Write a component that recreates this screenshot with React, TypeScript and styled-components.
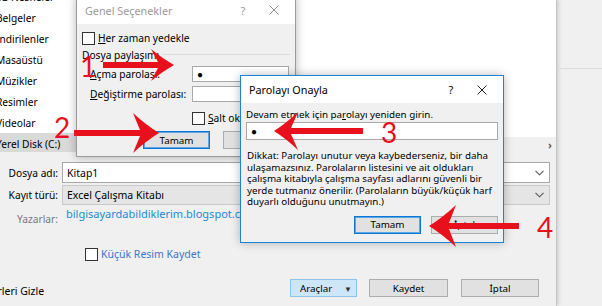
import React from "react";
import styled, { createGlobalStyle } from "styled-components";

const UI_FONT = "'Noto Sans', 'Open Sans', sans-serif";
const RED = "#e8101c";

const Global = createGlobalStyle`
  body {
    margin: 0;
    background: #f0f0f0;
    font-family: ${UI_FONT};
    font-size: 9.8px;
    color: #000;
  }
`;

const Page = styled.div`
  position: relative;
  width: 602px;
  height: 306px;
  overflow: hidden;
  display: flex;
  background: #f0f0f0;
`;

/* ---------- background: Farklı Kaydet window ---------- */

const SaveWindow = styled.div`
  width: 556px;
  height: 306px;
  display: flex;
  flex-direction: column;
  border-right: 1px solid #c4c4c4;
  box-shadow: 2px 0 3px rgba(0, 0, 0, 0.12);
  background: #f0f0f0;
`;

const SidePane = styled.div`
  flex: 1;
  display: flex;
  flex-direction: column;
`;

const SideTop = styled.div`
  height: 68px;
  border-bottom: 1px solid #dcdcdc;
`;

const Browser = styled.div`
  height: 152px;
  display: flex;
  flex-shrink: 0;
`;

const NavPane = styled.div`
  width: 76px;
  background: #fff;
  overflow: hidden;
`;

const NavList = styled.ul`
  list-style: none;
  margin: -14px 0 0 -4px;
  padding: 0;
`;

const NavItem = styled.li<{ $selected?: boolean }>`
  height: 21px;
  display: flex;
  align-items: center;
  white-space: nowrap;
  font-size: 10.2px;
  background: ${(p) => (p.$selected ? "#d9d9d9" : "transparent")};
`;

const FileList = styled.div`
  flex: 1;
  display: flex;
  flex-direction: column;
  background: #fff;
`;

const FileArea = styled.div`
  flex: 1;
`;

const HScroll = styled.div`
  height: 15px;
  background: #f0f0f0;
  display: flex;
  justify-content: flex-end;
  align-items: center;
  padding-right: 4px;
  color: #606060;
  font-size: 11px;
  font-weight: bold;
`;

const Form = styled.div`
  display: grid;
  grid-template-columns: 58px 488px;
  grid-template-rows: 21px 20px 24px;
  column-gap: 4px;
  row-gap: 2px;
  padding-top: 10px;
`;

const Label = styled.div<{ $muted?: boolean }>`
  text-align: right;
  align-self: center;
  font-size: 10.2px;
  color: ${(p) => (p.$muted ? "#7a7a7a" : "#000")};
`;

const TextField = styled.div`
  background: #fff;
  border: 1px solid #a8a8a8;
  display: flex;
  align-items: center;
  justify-content: space-between;
  padding: 0 5px 0 4px;
  font-size: 10.5px;
`;

const SelectField = styled(TextField)`
  background: #e5e5e5;
  border-color: #c9c9c9;
`;

const Chevron = () => (
  <svg width="9" height="6" viewBox="0 0 9 6">
    <path d="M0.5 0.8 L4.5 4.8 L8.5 0.8" fill="none" stroke="#555" strokeWidth="1.1" />
  </svg>
);

const Watermark = styled.div`
  align-self: start;
  margin: 0 0 0 4px;
  font-size: 11px;
  color: #1a8ad4;
  line-height: 14px;
`;

const CheckRow = styled.label`
  display: flex;
  align-items: center;
  gap: 3px;
  margin: 16px 0 0 85px;
  font-size: 10.5px;
  color: ${(p) => p.color || "#000"};
`;

const Box = styled.span<{ $size?: number }>`
  display: inline-block;
  width: ${(p) => p.$size || 11}px;
  height: ${(p) => p.$size || 11}px;
  border: 1px solid #333;
  background: #fff;
  flex-shrink: 0;
`;

const Footer = styled.div`
  display: flex;
  align-items: flex-start;
  margin-top: 18px;
  padding-right: 17px;
`;

const HideFolders = styled.div`
  margin: 5px 0 0 -29px;
  font-size: 10.5px;
  white-space: nowrap;
`;

const ButtonGroup = styled.div`
  margin-left: auto;
  display: flex;
`;

const Button = styled.button<{ $w: number; $default?: boolean; $gap?: number }>`
  width: ${(p) => p.$w}px;
  height: 18px;
  margin-left: ${(p) => p.$gap || 0}px;
  padding: 0;
  font-family: ${UI_FONT};
  font-size: 9.8px;
  color: #000;
  background: #e1e1e1;
  border: 1px solid ${(p) => (p.$default ? "#0a78d4" : "#adadad")};
  box-shadow: ${(p) => (p.$default ? "inset 0 0 0 1px #5aa5e3" : "none")};
  display: flex;
  align-items: center;
  justify-content: center;
`;

const ToolsButton = styled(Button)`
  background: #cde6f8;
  border-color: #8fc2ea;
  justify-content: space-between;
  padding: 0 4px 0 9px;
`;

const Caret = styled.span`
  font-size: 8px;
  color: #333;
`;

/* ---------- dialogs ---------- */

const Dialog = styled.div<{ $left: number; $top: number; $w: number; $active?: boolean }>`
  position: absolute;
  left: ${(p) => p.$left}px;
  top: ${(p) => p.$top}px;
  width: ${(p) => p.$w}px;
  background: #f0f0f0;
  border: 1px solid ${(p) => (p.$active ? "#1883d7" : "#9a9a9a")};
  box-shadow: 0 0 9px rgba(0, 0, 0, 0.28);
  display: flex;
  flex-direction: column;
`;

const TitleBar = styled.div<{ $h: number; $active?: boolean }>`
  height: ${(p) => p.$h}px;
  background: #fff;
  display: flex;
  align-items: center;
  padding-left: 8px;
  font-size: 10.8px;
  color: ${(p) => (p.$active ? "#000" : "#9a9a9a")};
`;

const TitleText = styled.span`
  flex: 1;
`;

const TitleHelp = styled.span`
  width: 20px;
  text-align: center;
  font-size: 11px;
`;

const TitleClose = styled.span`
  width: 42px;
  display: flex;
  justify-content: center;
`;

const CloseIcon = ({ color }: { color: string }) => (
  <svg width="10" height="10" viewBox="0 0 10 10">
    <path d="M0.5 0.5 L9.5 9.5 M9.5 0.5 L0.5 9.5" stroke={color} strokeWidth="1" />
  </svg>
);

const Body = styled.div<{ $pad: string }>`
  padding: ${(p) => p.$pad};
  display: flex;
  flex-direction: column;
`;

const OptRow = styled.div<{ $mt?: number; $ml?: number }>`
  display: flex;
  align-items: center;
  gap: 3px;
  margin-top: ${(p) => p.$mt || 0}px;
  margin-left: ${(p) => p.$ml || 0}px;
  white-space: nowrap;
  font-size: 10.2px;
`;

const GroupHeader = styled.div`
  display: flex;
  align-items: center;
  gap: 3px;
  height: 16px;
  margin-top: 2px;
  font-size: 10.2px;
  &::after {
    content: "";
    flex: 1;
    height: 1px;
    background: #dcdcdc;
    margin-top: -1px;
  }
`;

const FieldRow = styled.div<{ $mt: number }>`
  display: flex;
  align-items: center;
  margin: ${(p) => p.$mt}px 0 0 8px;
  font-size: 10.2px;
`;

const FieldLabel = styled.span`
  width: 102px;
`;

const Input = styled.div<{ $w?: number; $h: number }>`
  width: ${(p) => (p.$w ? `${p.$w}px` : "auto")};
  height: ${(p) => p.$h}px;
  box-sizing: border-box;
  background: #fff;
  border: 1px solid #a8a8a8;
  display: flex;
  align-items: center;
  padding-left: 4px;
  font-size: 10px;
`;

const Key = styled.span`
  text-decoration: underline;
`;

const DialogButtons = styled.div<{ $mt: number }>`
  display: flex;
  justify-content: flex-end;
  margin-top: ${(p) => p.$mt}px;
`;

const Prompt = styled.div`
  margin-top: 5px;
  line-height: 14px;
  font-size: 9.8px;
`;

const Warning = styled.p`
  margin: 10px 0 0 1px;
  line-height: 11.5px;
  font-size: 9.8px;
`;

/* ---------- annotations ---------- */

const Annotations = styled.svg`
  position: absolute;
  left: 0;
  top: 0;
  pointer-events: none;
`;

const StepNumber = styled.span<{ $x: number; $y: number }>`
  position: absolute;
  left: ${(p) => p.$x}px;
  top: ${(p) => p.$y}px;
  font-family: Lato, "DejaVu Sans", sans-serif;
  font-weight: 400;
  font-size: 28px;
  line-height: 1;
  color: ${RED};
`;

type ArrowSpec = { tx: number; ty: number; len: number; head: number; spread: number; dir: 1 | -1 };

const arrows: ArrowSpec[] = [
  { tx: 174, ty: 65, len: 71, head: 23, spread: 16, dir: 1 },
  { tx: 159, ty: 133, len: 85, head: 26, spread: 20, dir: 1 },
  { tx: 274, ty: 131, len: 89, head: 24, spread: 19, dir: -1 },
  { tx: 429, ty: 226, len: 90, head: 27, spread: 21, dir: -1 },
];

// dart-shaped arrow pointing right with its tip at 0,0
const arrowPath = ({ len, head, spread }: ArrowSpec) => {
  const j = head - 7;
  return `M0 0 Q${-head * 0.5} ${-spread * 0.4} ${-head} ${-spread}
    L${-j} -3 L${-len} -3 L${-len} 3 L${-j} 3
    L${-head} ${spread} Q${-head * 0.5} ${spread * 0.4} 0 0 Z`;
};

const navItems = [
  "3B Nesneler",
  "Belgeler",
  "İndirilenler",
  "Masaüstü",
  "Müzikler",
  "Resimler",
  "Videolar",
  "Yerel Disk (C:)",
];

export default function App() {
  return (
    <>
      <Global />
      <Page>
        <SaveWindow>
          <Browser>
            <NavPane>
              <NavList>
                {navItems.map((n) => (
                  <NavItem key={n} $selected={n.startsWith("Yerel")}>
                    {n}
                  </NavItem>
                ))}
              </NavList>
            </NavPane>
            <FileList>
              <FileArea />
              <HScroll>›</HScroll>
            </FileList>
          </Browser>

          <Form>
            <Label>Dosya adı:</Label>
            <TextField>
              Kitap1
              <Chevron />
            </TextField>
            <Label>Kayıt türü:</Label>
            <SelectField>
              Excel Çalışma Kitabı
              <Chevron />
            </SelectField>
            <Label $muted>Yazarlar:</Label>
            <Watermark>bilgisayardabildiklerim.blogspot.com</Watermark>
          </Form>

          <CheckRow color="#3a78c8">
            <Box />
            Küçük Resim Kaydet
          </CheckRow>

          <Footer>
            <HideFolders>Klasörleri Gizle</HideFolders>
            <ButtonGroup>
              <ToolsButton $w={67}>
                Araçlar <Caret>▼</Caret>
              </ToolsButton>
              <Button $w={79} $gap={12}>
                Kaydet
              </Button>
              <Button $w={78} $gap={13}>
                İptal
              </Button>
            </ButtonGroup>
          </Footer>
        </SaveWindow>
        <SidePane>
          <SideTop />
        </SidePane>

        <Dialog $left={76} $top={-5} $w={218}>
          <TitleBar $h={28}>
            <TitleText>Genel Seçenekler</TitleText>
            <TitleHelp>?</TitleHelp>
            <TitleClose>
              <CloseIcon color="#8a8a8a" />
            </TitleClose>
          </TitleBar>
          <Body $pad="7px 5px 7px 5px">
            <OptRow>
              <Box />
              <span>
                <Key>H</Key>er zaman yedekle
              </span>
            </OptRow>
            <GroupHeader>Dosya paylaşımı</GroupHeader>
            <FieldRow $mt={3}>
              <FieldLabel>
                <Key>A</Key>çma parolası:
              </FieldLabel>
              <Input $w={97} $h={16}>
                ●
              </Input>
            </FieldRow>
            <FieldRow $mt={4}>
              <FieldLabel>
                <Key>D</Key>eğiştirme parolası:
              </FieldLabel>
              <Input $w={97} $h={16} />
            </FieldRow>
            <OptRow $mt={9} $ml={110}>
              <Box />
              <span>
                <Key>S</Key>alt okunur önerilir
              </span>
            </OptRow>
            <DialogButtons $mt={6}>
              <Button $w={67} $default>
                Tamam
              </Button>
              <Button $w={67} $gap={13}>
                İptal
              </Button>
            </DialogButtons>
          </Body>
        </Dialog>

        <Dialog $left={240} $top={75} $w={262} $active>
          <TitleBar $h={27} $active>
            <TitleText>Parolayı Onayla</TitleText>
            <TitleHelp>?</TitleHelp>
            <TitleClose>
              <CloseIcon color="#222" />
            </TitleClose>
          </TitleBar>
          <Body $pad="0 5px 8px 5px">
            <Prompt>
              Devam etmek için pa<Key>r</Key>olayı yeniden girin.
            </Prompt>
            <Input $h={18}>●</Input>
            <Warning>
              Dikkat: Parolayı unutur veya kaybederseniz, bir daha
              <br />
              ulaşamazsınız. Parolaların listesini ve ait oldukları
              <br />
              çalışma kitabıyla çalışma sayfası adlarını güvenli bir
              <br />
              yerde tutmanız önerilir. (Parolaların büyük/küçük harf
              <br />
              duyarlı olduğunu unutmayın.)
            </Warning>
            <DialogButtons $mt={8}>
              <Button $w={67} $default>
                Tamam
              </Button>
              <Button $w={67} $gap={10}>
                İptal
              </Button>
            </DialogButtons>
          </Body>
        </Dialog>

        <Annotations width="602" height="306" viewBox="0 0 602 306">
          {arrows.map((a, i) => (
            <path
              key={i}
              d={arrowPath(a)}
              fill={RED}
              transform={`translate(${a.tx} ${a.ty}) scale(${a.dir} 1)`}
            />
          ))}
        </Annotations>
        <StepNumber $x={80} $y={52}>1</StepNumber>
        <StepNumber $x={54} $y={113}>2</StepNumber>
        <StepNumber $x={381} $y={118}>3</StepNumber>
        <StepNumber $x={537} $y={213}>4</StepNumber>
      </Page>
    </>
  );
}
